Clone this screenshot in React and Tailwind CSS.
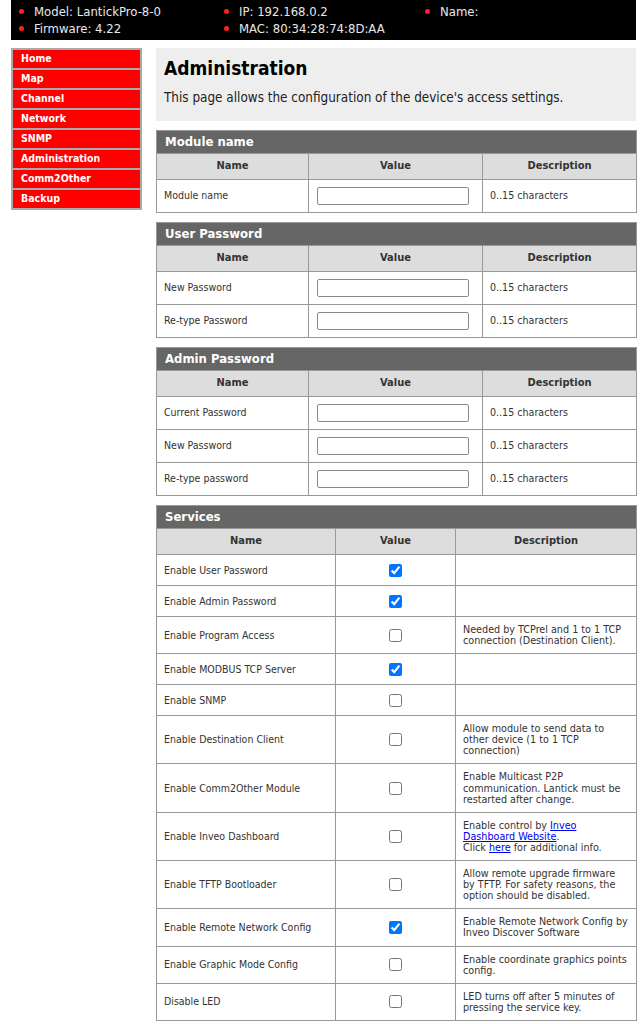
import React from 'react';

const FONT = { fontFamily: '"DejaVu Sans Condensed", "DejaVu Sans", Tahoma, sans-serif' };

const menu = ['Home', 'Map', 'Channel', 'Network', 'SNMP', 'Administration', 'Comm2Other', 'Backup'];

const Bullet = ({ children }) => (
    <div className="flex items-center h-[17px]">
        <span className="w-[5px] h-[5px] rounded-full bg-[#ff2020] mr-[10px]"></span>
        <span>{children}</span>
    </div>
);

const SectionHead = ({ title, cols }) => (
    <>
        <colgroup>
            {cols.map(c => <col key={c.label} className={c.w} />)}
        </colgroup>
        <thead>
            <tr>
                <th colSpan={3} className="bg-[#666666] text-white text-left text-[13px] font-bold h-[23px] pl-[8px] border border-[#999]">
                    {title}
                </th>
            </tr>
            <tr>
                {cols.map(c => (
                    <th key={c.label} className="bg-[#dddddd] text-[#333] text-[11px] font-bold h-[26px] border border-[#999]">
                        {c.label}
                    </th>
                ))}
            </tr>
        </thead>
    </>
);

const pwCols = [
    { label: 'Name', w: 'w-[152px]' },
    { label: 'Value', w: 'w-[174px]' },
    { label: 'Description', w: 'w-[154px]' },
];

const svcCols = [
    { label: 'Name', w: 'w-[179px]' },
    { label: 'Value', w: 'w-[120px]' },
    { label: 'Description', w: 'w-[181px]' },
];

const InputTable = ({ title, rows }) => (
    <table className="w-[480px] border-collapse table-fixed mt-[9px]">
        <SectionHead title={title} cols={pwCols} />
        <tbody>
            {rows.map(r => (
                <tr key={r} className="h-[33px] bg-white">
                    <td className="border border-[#999] pl-[7px] text-[10.5px] text-[#333]">{r}</td>
                    <td className="border border-[#999] pl-[8px]">
                        <input type="text" className="block w-[152px] h-[18px] border border-[#8a8a8a] rounded-[2px] bg-white" />
                    </td>
                    <td className="border border-[#999] pl-[7px] text-[10.6px] text-[#333]">0..15 characters</td>
                </tr>
            ))}
        </tbody>
    </table>
);

const Link = ({ children }) => <a href="#" className="text-[#0000ee] underline">{children}</a>;

// description lines are broken where the device page wraps them
const services = [
    { name: 'Enable User Password', on: true },
    { name: 'Enable Admin Password', on: true },
    { name: 'Enable Program Access', desc: ['Needed by TCPrel and 1 to 1 TCP', 'connection (Destination Client).'] },
    { name: 'Enable MODBUS TCP Server', on: true },
    { name: 'Enable SNMP' },
    { name: 'Enable Destination Client', desc: ['Allow module to send data to', 'other device (1 to 1 TCP', 'connection)'] },
    { name: 'Enable Comm2Other Module', desc: ['Enable Multicast P2P', 'communication. Lantick must be', 'restarted after change.'] },
    {
        name: 'Enable Inveo Dashboard',
        desc: [
            <>Enable control by <Link>Inveo</Link></>,
            <><Link>Dashboard Website</Link>.</>,
            <>Click <Link>here</Link> for additional info.</>,
        ],
    },
    { name: 'Enable TFTP Bootloader', desc: ['Allow remote upgrade firmware', 'by TFTP. For safety reasons, the', 'option should be disabled.'] },
    { name: 'Enable Remote Network Config', on: true, desc: ['Enable Remote Network Config by', 'Inveo Discover Software'] },
    { name: 'Enable Graphic Mode Config', desc: ['Enable coordinate graphics points', 'config.'] },
    { name: 'Disable LED', desc: ['LED turns off after 5 minutes of', 'pressing the service key.'] },
];

export default function App() {
    return (
        <div className="w-[641px] bg-white text-black pb-[10px]" style={FONT}>
            {/* top info bar */}
            <div className="ml-[11px] w-[625px] h-[40px] bg-black text-[#e8e8e8] text-[13px] grid grid-cols-[205px_201px_1fr] content-center pl-[8px]">
                <Bullet>Model: LantickPro-8-0</Bullet>
                <Bullet>IP: 192.168.0.2</Bullet>
                <Bullet>Name:</Bullet>
                <Bullet>Firmware: 4.22</Bullet>
                <Bullet>MAC: 80:34:28:74:8D:AA</Bullet>
            </div>

            <div className="flex mt-[8px] ml-[11px] gap-[14px]">
                {/* side menu */}
                <div className="w-[131px] self-start border border-[#aaa]">
                    {menu.map(m => (
                        <div key={m} className="h-[20px] bg-[#ff0000] border border-[#aaa] text-white text-[10.5px] font-bold pl-[8px] flex items-center">
                            {m}
                        </div>
                    ))}
                </div>

                {/* main */}
                <div className="w-[480px]">
                    <div className="bg-[#eeeeee] h-[73px] px-[8px] pt-[9px]">
                        <h1 className="text-[19px] font-bold leading-[22px]">Administration</h1>
                        <p className="text-[13.4px] text-[#222] mt-[9px]">This page allows the configuration of the device's access settings.</p>
                    </div>

                    <InputTable title="Module name" rows={['Module name']} />
                    <InputTable title="User Password" rows={['New Password', 'Re-type Password']} />
                    <InputTable title="Admin Password" rows={['Current Password', 'New Password', 'Re-type password']} />

                    <table className="w-[480px] border-collapse table-fixed mt-[9px]">
                        <SectionHead title="Services" cols={svcCols} />
                        <tbody>
                            {services.map(s => (
                                <tr key={s.name} className="bg-white">
                                    <td className="border border-[#999] pl-[7px] text-[10.5px] leading-[11px] text-[#333] py-[7px]">{s.name}</td>
                                    <td className="border border-[#999] py-[7px]">
                                        <input type="checkbox" defaultChecked={!!s.on} className="block w-[13px] h-[13px] my-[1.5px] mx-auto" />
                                    </td>
                                    <td className="border border-[#999] pl-[7px] text-[10.7px] leading-[11.1px] text-[#333] py-[7px]">
                                        {s.desc && s.desc.map((line, i) => (
                                            <div key={i} className="whitespace-nowrap">{line}</div>
                                        ))}
                                    </td>
                                </tr>
                            ))}
                        </tbody>
                    </table>
                </div>
            </div>
        </div>
    );
}
